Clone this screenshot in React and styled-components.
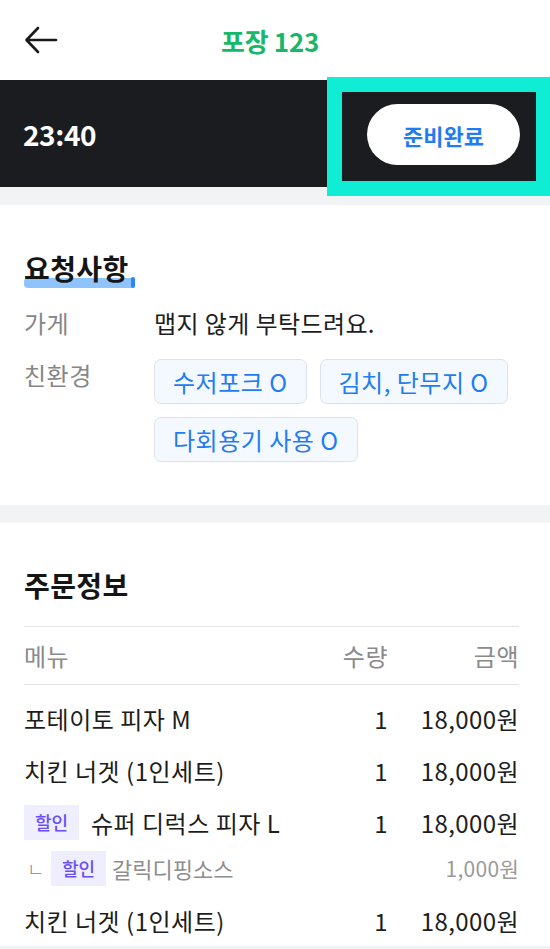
import React from "react";
import styled, { createGlobalStyle } from "styled-components";

const GlobalStyle = createGlobalStyle`
  * { box-sizing: border-box; }
  body {
    margin: 0;
    background: #ffffff;
    font-family: "Noto Sans CJK KR", "Noto Sans", sans-serif;
    color: #1f1f1f;
  }
`;

const requests = [{ label: "가게", text: "맵지 않게 부탁드려요." }];
const ecoChips = ["수저포크 O", "김치, 단무지 O", "다회용기 사용 O"];

const orders = [
  { name: "포테이토 피자 M", qty: 1, price: "18,000원" },
  { name: "치킨 너겟 (1인세트)", qty: 1, price: "18,000원" },
  { name: "슈퍼 디럭스 피자 L", qty: 1, price: "18,000원", sale: true },
  { name: "갈릭디핑소스", price: "1,000원", sale: true, option: true },
  { name: "치킨 너겟 (1인세트)", qty: 1, price: "18,000원" },
];

function BackIcon() {
  return (
    <svg width="34" height="28" viewBox="0 0 34 28" fill="none">
      <path
        d="M32 14H3M14 2L2.5 14l11.5 12"
        stroke="#1a1a1a"
        strokeWidth="2.6"
        strokeLinecap="round"
        strokeLinejoin="round"
      />
    </svg>
  );
}

function App() {
  return (
    <>
      <GlobalStyle />
      <Page>
        <Header>
          <BackButton>
            <BackIcon />
          </BackButton>
          <HeaderTitle>포장 123</HeaderTitle>
          <span />
        </Header>

        <TimeBar>
          <Time>23:40</Time>
          <ButtonFrame>
            <ReadyButton>준비완료</ReadyButton>
          </ButtonFrame>
        </TimeBar>

        <Section pad="45px 24px 43px">
          <SectionTitle>
            <Highlight>요청사항</Highlight>
          </SectionTitle>
          <InfoList>
            {requests.map((r) => (
              <InfoRow key={r.label}>
                <InfoLabel>{r.label}</InfoLabel>
                <InfoValue>{r.text}</InfoValue>
              </InfoRow>
            ))}
            <InfoRow>
              <InfoLabel>친환경</InfoLabel>
              <ChipList>
                {ecoChips.map((c) => (
                  <Chip key={c}>{c}</Chip>
                ))}
              </ChipList>
            </InfoRow>
          </InfoList>
        </Section>

        <Section pad="44px 31px 0 24px">
          <SectionTitle>주문정보</SectionTitle>
          <Table>
            <HeadRow>
              <HeadCell>메뉴</HeadCell>
              <HeadCell align="right">수량</HeadCell>
              <HeadCell align="right">금액</HeadCell>
            </HeadRow>
            <Body>
              {orders.map((o, i) =>
                o.option ? (
                  <OptionRow key={i}>
                    <MenuCell>
                      <Corner>ㄴ</Corner>
                      <SaleBadge>할인</SaleBadge>
                      <OptionName>{o.name}</OptionName>
                    </MenuCell>
                    <span />
                    <OptionPrice>{o.price}</OptionPrice>
                  </OptionRow>
                ) : (
                  <OrderRow key={i}>
                    <MenuCell>
                      {o.sale && <SaleBadge>할인</SaleBadge>}
                      <MenuName>{o.name}</MenuName>
                    </MenuCell>
                    <Cell align="right">{o.qty}</Cell>
                    <Cell align="right">{o.price}</Cell>
                  </OrderRow>
                )
              )}
            </Body>
          </Table>
        </Section>
      </Page>
    </>
  );
}

const Page = styled.div`
  width: 550px;
  height: 949px;
  overflow: hidden;
  background: #f2f3f5;
  display: flex;
  flex-direction: column;
  gap: 18px;
`;

const Header = styled.header`
  height: 80px;
  background: #fff;
  display: grid;
  grid-template-columns: 60px 1fr 60px;
  align-items: center;
  padding: 0 34px 0 24px;
  margin-bottom: -18px;
`;

const BackButton = styled.button`
  border: none;
  background: none;
  padding: 0;
  display: flex;
  align-items: center;
  cursor: pointer;
`;

const HeaderTitle = styled.h1`
  margin: 0;
  text-align: center;
  font-size: 26px;
  font-weight: 700;
  color: #17b86a;
  letter-spacing: -0.3px;
`;

const TimeBar = styled.div`
  height: 107px;
  background: #1b1c1f;
  display: flex;
  justify-content: space-between;
  align-items: center;
  padding: 0 14px 0 23px;
`;

const Time = styled.span`
  font-family: "Noto Sans CJK KR", "Noto Sans", sans-serif;
  font-size: 28px;
  font-weight: 700;
  color: #fff;
  letter-spacing: -0.4px;
`;

const ButtonFrame = styled.div`
  width: 194px;
  height: 89px;
  margin-top: 6px;
  outline: 15px solid #0fedd5;
  padding: 12px 0 0 25px;
`;

const ReadyButton = styled.button`
  width: 153px;
  height: 61px;
  border: none;
  border-radius: 31px;
  background: #fff;
  color: #1f7cf2;
  font-family: "Noto Sans CJK KR", sans-serif;
  font-size: 22px;
  font-weight: 700;
  cursor: pointer;
`;

const Section = styled.section`
  background: #fff;
  padding: ${(p) => p.pad};
`;

const SectionTitle = styled.h2`
  margin: 0;
  font-size: 28px;
  line-height: 36px;
  font-weight: 700;
  color: #151515;
  letter-spacing: 0.4px;
`;

const Highlight = styled.span`
  position: relative;
  display: inline-block;
  z-index: 0;
  &::before {
    content: "";
    position: absolute;
    left: 0;
    right: -6px;
    top: 28px;
    height: 10px;
    border-radius: 4px;
    background: #8fc3fb;
    z-index: -1;
  }
  &::after {
    content: "";
    position: absolute;
    right: -6px;
    top: 27px;
    width: 4px;
    height: 11px;
    border-radius: 2px;
    background: #2a86f5;
  }
`;

const InfoList = styled.div`
  margin-top: 21px;
  display: flex;
  flex-direction: column;
  gap: 20px;
`;

const InfoRow = styled.div`
  display: grid;
  grid-template-columns: 130px 1fr;
  align-items: start;
`;

const InfoLabel = styled.span`
  font-size: 24px;
  line-height: 32px;
  color: #868686;
  letter-spacing: 0.5px;
`;

const InfoValue = styled.span`
  font-size: 24px;
  line-height: 32px;
  color: #1d1d1d;
  letter-spacing: 0.4px;
`;

const ChipList = styled.div`
  display: flex;
  flex-wrap: wrap;
  gap: 13px;
  max-width: 370px;
`;

const Chip = styled.span`
  height: 45px;
  display: inline-flex;
  align-items: center;
  padding: 0 18px;
  border: 1.5px solid #dde2e8;
  border-radius: 7px;
  background: #f4f8ff;
  color: #1f7cf2;
  font-size: 24px;
  letter-spacing: 0.5px;
`;

const Table = styled.div`
  margin-top: 23px;
`;

const HeadRow = styled.div`
  display: grid;
  grid-template-columns: 1fr 60px 131px;
  align-items: center;
  height: 59px;
  border-top: 1.5px solid #e4e4e4;
  border-bottom: 1.5px solid #e4e4e4;
`;

const HeadCell = styled.span`
  font-size: 24px;
  color: #8a8a8a;
  letter-spacing: 0.5px;
  text-align: ${(p) => p.align || "left"};
`;

const Body = styled.div`
  padding-top: 7px;
`;

const OrderRow = styled.div`
  display: grid;
  grid-template-columns: 1fr 60px 131px;
  align-items: center;
  height: 52px;
`;

const OptionRow = styled(OrderRow)`
  height: 40px;
  margin-bottom: 6px;
`;

const MenuCell = styled.div`
  display: flex;
  align-items: center;
  gap: 12px;
`;

const MenuName = styled.span`
  font-size: 24px;
  color: #1d1d1d;
  letter-spacing: 0.5px;
`;

const Cell = styled.span`
  font-size: 24px;
  color: #1d1d1d;
  text-align: ${(p) => p.align || "left"};
  letter-spacing: 0.4px;
`;

const SaleBadge = styled.span`
  width: 55px;
  height: 35px;
  flex-shrink: 0;
  display: inline-flex;
  align-items: center;
  justify-content: center;
  background: #eeeeff;
  color: #6a4ff5;
  font-size: 18px;
  font-weight: 500;
`;

const Corner = styled.span`
  width: 16px;
  margin-left: 3px;
  margin-right: -4px;
  font-size: 19px;
  font-weight: 300;
  color: #8a8a8a;
`;

const OptionName = styled.span`
  font-size: 22px;
  color: #8e8e8e;
  margin-left: -6px;
`;

const OptionPrice = styled.span`
  font-size: 21px;
  color: #9a9a9a;
  text-align: right;
  letter-spacing: 0.3px;
`;

export default App;
